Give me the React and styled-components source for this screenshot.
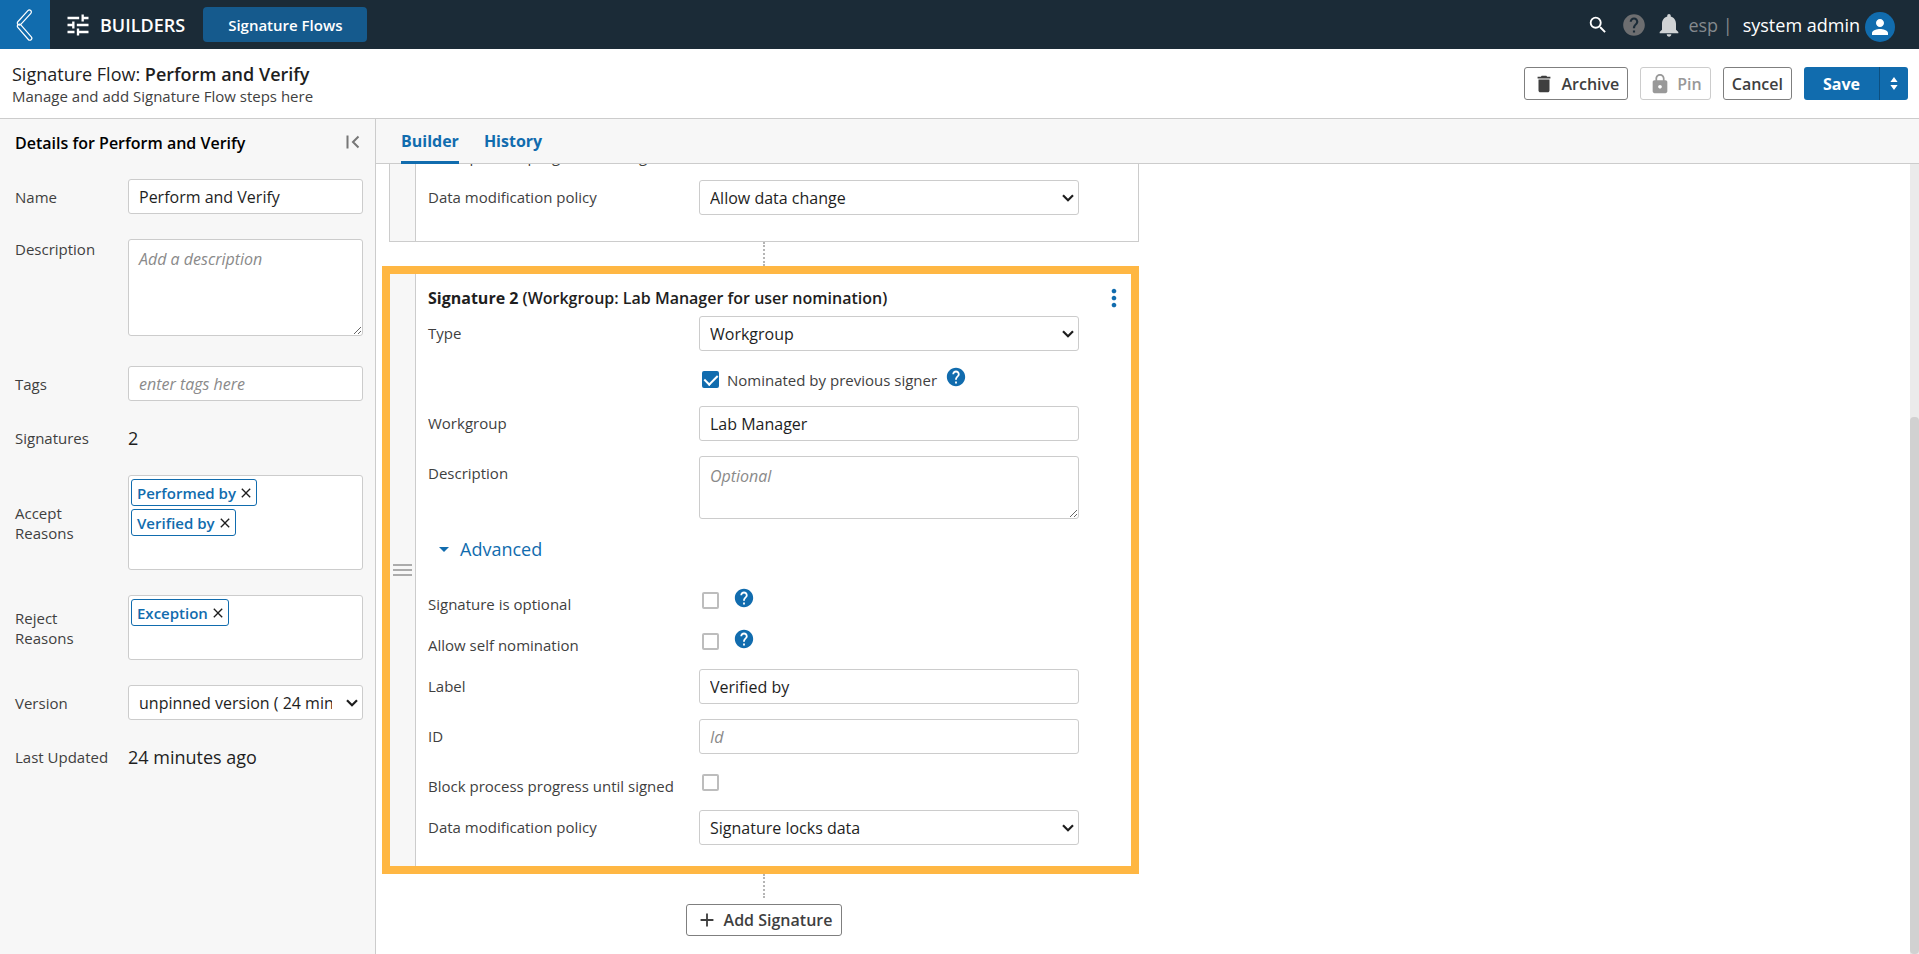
import styled, { createGlobalStyle } from 'styled-components'
import {
  MdTune,
  MdSearch,
  MdHelp,
  MdNotifications,
  MdPerson,
  MdDelete,
  MdLock,
  MdMoreVert,
  MdArrowDropDown,
  MdAdd,
  MdClose,
} from 'react-icons/md'

const colors = {
  bar: '#1b2b37',
  primary: '#116cae',
  primaryDark: '#155a8d',
  highlight: '#ffb743',
  border: '#cccccc',
  panel: '#f7f7f7',
  text: '#1e1e1e',
  label: '#3f3f3f',
  muted: '#8a8a8a',
}

const GlobalStyle = createGlobalStyle`
  * {
    box-sizing: border-box;
  }
  body {
    margin: 0;
    font-family: 'Open Sans', 'Noto Sans', sans-serif;
    font-size: 16px;
    color: ${colors.text};
    background: white;
  }
  button, input, textarea, select {
    font-family: inherit;
    font-size: 16px;
    color: inherit;
    margin: 0;
  }
  button {
    cursor: pointer;
  }
`

const Page = styled.div`
  display: flex;
  flex-direction: column;
  height: 100vh;
`

/* Top bar */

const TopBar = styled.header`
  display: flex;
  align-items: center;
  flex: none;
  height: 49px;
  padding-right: 24px;
  background: ${colors.bar};
  color: white;
`

const BackLink = styled.a`
  display: flex;
  align-items: center;
  justify-content: center;
  width: 50px;
  height: 100%;
  margin-right: 14px;
  background: ${colors.primary};
`

const AppName = styled.div`
  display: flex;
  align-items: center;
  gap: 8px;
  margin-right: 18px;
  font-size: 18px;
  font-weight: 600;
`

const FlowsButton = styled.button`
  height: 35px;
  padding: 0 25px;
  border: none;
  border-radius: 4px;
  background: ${colors.primaryDark};
  color: white;
  font-size: 15px;
  font-weight: 600;
`

const Tools = styled.div`
  display: flex;
  align-items: center;
  margin-left: auto;
  font-size: 18px;
`

const ToolButton = styled.button`
  display: flex;
  padding: 0;
  margin-right: ${(props) => props.$space || 8}px;
  border: none;
  background: none;
  color: ${(props) => props.$color || 'white'};
`

const Org = styled.span`
  margin-right: 10px;
  color: #84898d;
`

const UserName = styled.span`
  margin-right: 5px;
`

const Avatar = styled.span`
  display: flex;
  align-items: center;
  justify-content: center;
  width: 30px;
  height: 30px;
  margin-top: 4px;
  border-radius: 50%;
  background: ${colors.primary};
`

/* Title and actions */

const TitleBar = styled.div`
  display: flex;
  align-items: center;
  justify-content: space-between;
  flex: none;
  height: 70px;
  padding: 0 11px 0 12px;
  border-bottom: 1px solid ${colors.border};
`

const Title = styled.h1`
  margin: 0;
  font-size: 18px;
  font-weight: 400;
  line-height: 24px;
  & strong {
    font-weight: 600;
  }
`

const Subtitle = styled.p`
  margin: 0;
  font-size: 15px;
  line-height: 20px;
  color: ${colors.label};
`

const Actions = styled.div`
  display: flex;
  gap: 12px;
`

const Button = styled.button`
  display: flex;
  align-items: center;
  gap: 6px;
  height: 33px;
  padding: 0 8px;
  border: 1px solid #7f7f7f;
  border-radius: 3px;
  background: white;
  color: ${colors.label};
  font-weight: 600;
  &:disabled {
    border-color: ${colors.border};
    color: #999999;
  }
`

const SaveGroup = styled.div`
  display: flex;
  height: 33px;
  border-radius: 3px;
  overflow: hidden;
`

const SaveButton = styled.button`
  display: flex;
  align-items: center;
  padding: 0 ${(props) => (props.$narrow ? 10 : 19)}px;
  border: none;
  border-left: ${(props) => (props.$narrow ? '1px solid #0c4f80' : 'none')};
  background: ${colors.primary};
  color: white;
  font-weight: 700;
`

/* Sidebar */

const Content = styled.div`
  display: flex;
  flex: 1;
  min-height: 0;
`

const Sidebar = styled.aside`
  flex: none;
  width: 376px;
  padding: 0 12px 0 15px;
  border-right: 1px solid ${colors.border};
  background: ${colors.panel};
`

const SidebarHeader = styled.div`
  display: flex;
  align-items: center;
  justify-content: space-between;
  height: 60px;
  padding-bottom: 12px;
`

const SidebarTitle = styled.h2`
  margin: 0;
  font-size: 16px;
  font-weight: 600;
  color: black;
`

const CollapseButton = styled.button`
  display: flex;
  padding: 0 3px 3px;
  border: none;
  background: none;
  color: #777777;
`

const Details = styled.div`
  display: flex;
  flex-direction: column;
  gap: 25px;
`

const DetailRow = styled.div`
  display: grid;
  grid-template-columns: 113px 1fr;
  align-items: ${(props) => (props.$top ? 'start' : 'center')};
  padding-bottom: ${(props) => (props.$top ? 5 : 0)}px;
`

const DetailLabel = styled.label`
  max-width: 96px;
  font-size: 15px;
  line-height: 20px;
  color: ${colors.label};
`

const DetailValue = styled.span`
  font-size: 18px;
  line-height: 24px;
  color: ${colors.text};
`

const Input = styled.input`
  width: 100%;
  height: 35px;
  padding: 0 10px;
  border: 1px solid ${colors.border};
  border-radius: 3px;
  background: white;
  &::placeholder {
    color: ${colors.muted};
    font-style: italic;
  }
`

const TextArea = styled.textarea`
  display: block;
  width: 100%;
  height: ${(props) => props.$height}px;
  padding: 8px 10px;
  border: 1px solid ${colors.border};
  border-radius: 3px;
  background: white;
  resize: vertical;
  &::placeholder {
    color: ${colors.muted};
    font-style: italic;
  }
`

/* The select and its arrow share one grid cell */
const SelectBox = styled.div`
  display: grid;
  align-items: center;
  min-width: 0;
  & > * {
    grid-area: 1 / 1;
  }
  & svg {
    justify-self: end;
    margin-right: 5px;
    pointer-events: none;
  }
`

const StyledSelect = styled.select`
  appearance: none;
  width: 100%;
  min-width: 0;
  height: 35px;
  padding: 0 30px 0 10px;
  border: 1px solid ${colors.border};
  border-radius: 3px;
  background: white;
`

const ChipBox = styled.div`
  display: flex;
  flex-direction: column;
  align-items: flex-start;
  gap: 3px;
  padding: 3px 2px;
  border: 1px solid ${colors.border};
  border-radius: 3px;
  background: white;
`

const Chip = styled.span`
  display: flex;
  align-items: center;
  gap: 2px;
  height: 27px;
  padding: 0 2px 0 5px;
  border: 1px solid ${colors.primary};
  border-radius: 3px;
  color: ${colors.primary};
  font-size: 15px;
  font-weight: 600;
  & button {
    display: flex;
    padding: 0;
    border: none;
    background: none;
    color: ${colors.text};
  }
`

const ChipInput = styled.input`
  width: 100%;
  height: 27px;
  padding: 0 5px;
  border: none;
  outline: none;
  background: none;
`

/* Builder */

const Main = styled.main`
  display: flex;
  flex-direction: column;
  flex: 1;
  min-width: 0;
`

const Tabs = styled.nav`
  display: flex;
  flex: none;
  gap: 25px;
  height: 45px;
  padding-left: 25px;
  border-bottom: 1px solid ${colors.border};
  background: ${colors.panel};
`

const Tab = styled.a`
  height: 45px;
  padding-top: 2px;
  border-bottom: 3px solid
    ${(props) => (props.$active ? colors.primary : 'transparent')};
  color: ${colors.primary};
  font-weight: 700;
  line-height: 40px;
  text-decoration: none;
`

const Body = styled.div`
  display: flex;
  flex: 1;
  min-height: 0;
`

/* column-reverse keeps the list scrolled to its last signature */
const Scroller = styled.div`
  display: flex;
  flex-direction: column-reverse;
  flex: 1;
  overflow-y: auto;
  scrollbar-width: none;
`

const Flow = styled.div`
  display: flex;
  flex-direction: column;
  align-items: center;
  flex: none;
  width: 750px;
  margin: 0 13px 18px;
`

const ScrollTrack = styled.div`
  display: flex;
  flex-direction: column;
  justify-content: flex-end;
  width: 9px;
  background: #ebebeb;
`

const ScrollThumb = styled.div`
  height: 68%;
  border-radius: 4px;
  background: #d1d1d1;
`

const Card = styled.section`
  display: flex;
  align-self: flex-end;
  width: ${(props) => (props.$selected ? 757 : 750)}px;
  margin-left: ${(props) => (props.$selected ? -7 : 0)}px;
  border: ${(props) =>
    props.$selected
      ? `8px solid ${colors.highlight}`
      : `1px solid ${colors.border}`};
`

const DragHandle = styled.div`
  display: flex;
  align-items: center;
  justify-content: center;
  flex: none;
  width: 26px;
  border-right: 1px solid ${colors.border};
  background: ${colors.panel};
`

const CardBody = styled.div`
  flex: 1;
  padding: 0 3px ${(props) => (props.$last ? 6 : 11)}px 12px;
`

const CardHeader = styled.div`
  display: flex;
  align-items: center;
  justify-content: space-between;
  height: 42px;
  padding-top: 6px;
`

const CardTitle = styled.h3`
  margin: 0;
  font-size: 16px;
  font-weight: 600;
  & strong {
    font-weight: 700;
  }
`

const MenuButton = styled.button`
  display: flex;
  padding: 0;
  border: none;
  background: none;
  color: ${colors.primary};
`

const Row = styled.div`
  display: grid;
  grid-template-columns: 271px 380px;
  align-items: start;
  margin-bottom: ${(props) => (props.$check ? 6 : 15)}px;
`

const RowLabel = styled.label`
  font-size: 15px;
  line-height: 35px;
  color: ${colors.label};
`

const CheckLine = styled.div`
  display: flex;
  align-items: flex-start;
  grid-column: 2;
  height: 34px;
  padding: 5px 0 0 3px;
`

const CheckLabel = styled.label`
  margin: 0 8px;
  font-size: 15px;
  line-height: 18px;
  color: ${colors.label};
`

const Checkbox = styled.input`
  appearance: none;
  display: grid;
  place-content: center;
  flex: none;
  width: 17px;
  height: 17px;
  border: 2px solid #bdbdbd;
  border-radius: 2px;
  background: white;
  &:checked {
    border-color: ${colors.primary};
    background: ${colors.primary};
  }
  &:checked::before {
    content: '';
    width: 6px;
    height: 11px;
    margin-bottom: 3px;
    border: solid white;
    border-width: 0 2px 2px 0;
    transform: rotate(45deg);
  }
`

const HelpButton = styled.button`
  display: flex;
  padding: 0;
  margin-top: -5px;
  margin-left: ${(props) => (props.$wide ? 14 : 0)}px;
  border: none;
  background: none;
  color: ${colors.primary};
`

const AdvancedButton = styled.button`
  display: flex;
  align-items: center;
  gap: 4px;
  height: 30px;
  padding: 0 4px;
  margin-bottom: 23px;
  border: none;
  background: none;
  color: ${colors.primary};
  font-size: 18px;
`

const Connector = styled.div`
  height: 24px;
  border-left: 2px dotted #b5b5b5;
`

const AddButton = styled(Button)`
  margin-top: 6px;
  height: 32px;
  padding: 0 9px;
`

function BackIcon() {
  return (
    <svg
      width="18"
      height="34"
      viewBox="0 0 18 34"
      fill="none"
      stroke="white"
      strokeWidth="1.2"
    >
      <rect
        x="0"
        y="-2"
        width="19"
        height="4"
        rx="2"
        transform="translate(2 16.6) rotate(-48)"
      />
      <rect
        x="0"
        y="-2"
        width="20"
        height="4"
        rx="2"
        transform="translate(2 16.6) rotate(49)"
      />
    </svg>
  )
}

function CollapseIcon() {
  return (
    <svg width="14" height="14" viewBox="0 0 14 14" fill="none">
      <path
        d="M1.5 0.5V13.5M12.5 1.5 7 7l5.5 5.5"
        stroke="currentColor"
        strokeWidth="2"
      />
    </svg>
  )
}

function SortIcon() {
  return (
    <svg width="8" height="13" viewBox="0 0 8 13" fill="currentColor">
      <path d="M4 0 7.6 5H0.4zM4 13 0.4 8h7.2z" />
    </svg>
  )
}

function ArrowIcon() {
  return (
    <svg width="12" height="8" viewBox="0 0 12 8" fill="none">
      <path d="M1 1.2 6 6.2l5-5" stroke={colors.text} strokeWidth="2.2" />
    </svg>
  )
}

function GripIcon() {
  return (
    <svg width="19" height="13" viewBox="0 0 19 13" fill="#ababab">
      <path d="M0 0h19v2H0zM0 5h19v2H0zM0 10h19v2H0z" />
    </svg>
  )
}

function Select({ id, value }) {
  return (
    <SelectBox>
      <StyledSelect id={id}>
        <option>{value}</option>
      </StyledSelect>
      <ArrowIcon />
    </SelectBox>
  )
}

function Reasons({ id, label, items }) {
  return (
    <DetailRow>
      <DetailLabel htmlFor={id}>{label}</DetailLabel>
      <ChipBox>
        {items.map((item) => (
          <Chip key={item}>
            {item}
            <button type="button" aria-label={`Remove ${item}`}>
              <MdClose size={16} />
            </button>
          </Chip>
        ))}
        <ChipInput id={id} type="text" />
      </ChipBox>
    </DetailRow>
  )
}

function CheckRow({ id, label, help }) {
  return (
    <Row $check>
      <RowLabel htmlFor={id}>{label}</RowLabel>
      <CheckLine>
        <Checkbox id={id} type="checkbox" />
        {help && (
          <HelpButton $wide type="button" aria-label="Help">
            <MdHelp size={22} />
          </HelpButton>
        )}
      </CheckLine>
    </Row>
  )
}

function SelectRow({ id, label, value }) {
  return (
    <Row>
      <RowLabel htmlFor={id}>{label}</RowLabel>
      <Select id={id} value={value} />
    </Row>
  )
}

function InputRow({ id, label, value, placeholder }) {
  return (
    <Row>
      <RowLabel htmlFor={id}>{label}</RowLabel>
      <Input
        id={id}
        type="text"
        defaultValue={value}
        placeholder={placeholder}
      />
    </Row>
  )
}

function App() {
  return (
    <Page>
      <GlobalStyle />
      <TopBar>
        <BackLink href="#" aria-label="Back">
          <BackIcon />
        </BackLink>
        <AppName>
          <MdTune size={28} />
          BUILDERS
        </AppName>
        <FlowsButton type="button">Signature Flows</FlowsButton>
        <Tools>
          <ToolButton $space={12} type="button" aria-label="Search">
            <MdSearch size={22} />
          </ToolButton>
          <ToolButton type="button" $color="#6d6e70" aria-label="Help">
            <MdHelp size={26} />
          </ToolButton>
          <ToolButton
            $space={5}
            type="button"
            $color="#d0d3d5"
            aria-label="Notifications"
          >
            <MdNotifications size={28} />
          </ToolButton>
          <Org>esp |</Org>
          <UserName>system admin</UserName>
          <Avatar>
            <MdPerson size={24} />
          </Avatar>
        </Tools>
      </TopBar>

      <TitleBar>
        <div>
          <Title>
            Signature Flow: <strong>Perform and Verify</strong>
          </Title>
          <Subtitle>Manage and add Signature Flow steps here</Subtitle>
        </div>
        <Actions>
          <Button type="button">
            <MdDelete size={22} />
            Archive
          </Button>
          <Button type="button" disabled>
            <MdLock size={22} />
            Pin
          </Button>
          <Button type="button">Cancel</Button>
          <SaveGroup>
            <SaveButton type="button">Save</SaveButton>
            <SaveButton $narrow type="button" aria-label="Save options">
              <SortIcon />
            </SaveButton>
          </SaveGroup>
        </Actions>
      </TitleBar>

      <Content>
        <Sidebar>
          <SidebarHeader>
            <SidebarTitle>Details for Perform and Verify</SidebarTitle>
            <CollapseButton type="button" aria-label="Collapse">
              <CollapseIcon />
            </CollapseButton>
          </SidebarHeader>
          <Details>
            <DetailRow>
              <DetailLabel htmlFor="name">Name</DetailLabel>
              <Input id="name" type="text" defaultValue="Perform and Verify" />
            </DetailRow>
            <DetailRow $top>
              <DetailLabel htmlFor="description">Description</DetailLabel>
              <TextArea
                id="description"
                $height={97}
                placeholder="Add a description"
              />
            </DetailRow>
            <DetailRow>
              <DetailLabel htmlFor="tags">Tags</DetailLabel>
              <Input id="tags" type="text" placeholder="enter tags here" />
            </DetailRow>
            <DetailRow>
              <DetailLabel as="span">Signatures</DetailLabel>
              <DetailValue>2</DetailValue>
            </DetailRow>
            <Reasons
              id="accept"
              label="Accept Reasons"
              items={['Performed by', 'Verified by']}
            />
            <Reasons id="reject" label="Reject Reasons" items={['Exception']} />
            <DetailRow>
              <DetailLabel htmlFor="version">Version</DetailLabel>
              <Select id="version" value="unpinned version ( 24 minutes ago )" />
            </DetailRow>
            <DetailRow>
              <DetailLabel as="span">Last Updated</DetailLabel>
              <DetailValue>24 minutes ago</DetailValue>
            </DetailRow>
          </Details>
        </Sidebar>

        <Main>
          <Tabs>
            <Tab href="#builder" $active>
              Builder
            </Tab>
            <Tab href="#history">History</Tab>
          </Tabs>
          <Body>
            <Scroller>
              <Flow>
                <Card>
                  <DragHandle />
                  <CardBody>
                    <CheckRow
                      id="block1"
                      label="Block process progress until signed"
                    />
                    <SelectRow
                      id="policy1"
                      label="Data modification policy"
                      value="Allow data change"
                    />
                  </CardBody>
                </Card>
                <Connector />
                <Card $selected>
                  <DragHandle>
                    <GripIcon />
                  </DragHandle>
                  <CardBody $last>
                    <CardHeader>
                      <CardTitle>
                        <strong>Signature 2</strong> (Workgroup: Lab Manager for
                        user nomination)
                      </CardTitle>
                      <MenuButton type="button" aria-label="Signature menu">
                        <MdMoreVert size={28} />
                      </MenuButton>
                    </CardHeader>
                    <SelectRow id="type" label="Type" value="Workgroup" />
                    <Row $check>
                      <CheckLine>
                        <Checkbox id="nominated" type="checkbox" defaultChecked />
                        <CheckLabel htmlFor="nominated">
                          Nominated by previous signer
                        </CheckLabel>
                        <HelpButton type="button" aria-label="Help">
                          <MdHelp size={22} />
                        </HelpButton>
                      </CheckLine>
                    </Row>
                    <InputRow
                      id="workgroup"
                      label="Workgroup"
                      value="Lab Manager"
                    />
                    <Row>
                      <RowLabel htmlFor="signDescription">Description</RowLabel>
                      <TextArea
                        id="signDescription"
                        $height={63}
                        placeholder="Optional"
                      />
                    </Row>
                    <AdvancedButton type="button" aria-expanded="true">
                      <MdArrowDropDown size={24} />
                      Advanced
                    </AdvancedButton>
                    <CheckRow id="optional" label="Signature is optional" help />
                    <CheckRow id="self" label="Allow self nomination" help />
                    <InputRow id="label" label="Label" value="Verified by" />
                    <InputRow id="signId" label="ID" placeholder="Id" />
                    <CheckRow
                      id="block2"
                      label="Block process progress until signed"
                    />
                    <SelectRow
                      id="policy2"
                      label="Data modification policy"
                      value="Signature locks data"
                    />
                  </CardBody>
                </Card>
                <Connector />
                <AddButton type="button">
                  <MdAdd size={22} />
                  Add Signature
                </AddButton>
              </Flow>
            </Scroller>
            <ScrollTrack>
              <ScrollThumb />
            </ScrollTrack>
          </Body>
        </Main>
      </Content>
    </Page>
  )
}

export default App
